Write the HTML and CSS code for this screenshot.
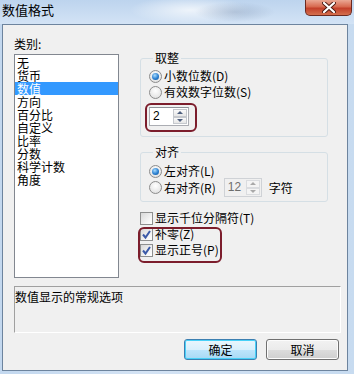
FILE: index.html
```html
<!DOCTYPE html>
<html lang="zh-CN">
  <head>
    <meta charset="UTF-8" />
    <title>数值格式</title>
    <link rel="stylesheet" href="styles.css">
  </head>
  <body>
    <div class="window">
      <div class="titlebar">
        <span class="title">数值格式</span>
        <span class="close">
          <svg width="14" height="11" viewBox="0 0 14 11">
            <path d="M2 1 L12 10 M12 1 L2 10" stroke="#4a1a12" stroke-width="4" stroke-linecap="round" />
            <path d="M2 1 L12 10 M12 1 L2 10" stroke="#fff" stroke-width="2.2" stroke-linecap="round" />
          </svg>
        </span>
      </div>
      <div class="client">
        <div class="top">
          <div class="left">
            <div class="label">类别:</div>
            <ul class="listbox">
              <li>无</li>
              <li>货币</li>
              <li class="selected">数值</li>
              <li>方向</li>
              <li>百分比</li>
              <li>自定义</li>
              <li>比率</li>
              <li>分数</li>
              <li>科学计数</li>
              <li>角度</li>
            </ul>
          </div>
          <div class="right">
            <fieldset class="group group-round">
              <legend>取整</legend>
              <div class="row"><span class="radio on"></span>小数位数(D)</div>
              <div class="row"><span class="radio"></span>有效数字位数(S)</div>
              <div class="spin">
                <span class="spin-value">2</span>
                <span class="spin-buttons">
                  <span class="spin-btn"><i class="arrow up"></i></span>
                  <span class="spin-btn"><i class="arrow down"></i></span>
                </span>
              </div>
            </fieldset>
            <fieldset class="group group-align">
              <legend>对齐</legend>
              <div class="row"><span class="radio on"></span>左对齐(L)</div>
              <div class="row row-spin">
                <span class="radio"></span>右对齐(R)
                <div class="spin disabled">
                  <span class="spin-value">12</span>
                  <span class="spin-buttons">
                    <span class="spin-btn"><i class="arrow up"></i></span>
                    <span class="spin-btn"><i class="arrow down"></i></span>
                  </span>
                </div>
                <span class="unit">字符</span>
              </div>
            </fieldset>
            <div class="checks">
              <div class="row"><span class="check"></span>显示千位分隔符(T)</div>
              <div class="row"><span class="check on"><svg width="11" height="11" viewBox="0 0 11 11"><path d="M2 5.5 L4.5 8.5 L9 2" fill="none" stroke="#3b5aa8" stroke-width="2" /></svg></span>补零(Z)</div>
              <div class="row"><span class="check on"><svg width="11" height="11" viewBox="0 0 11 11"><path d="M2 5.5 L4.5 8.5 L9 2" fill="none" stroke="#3b5aa8" stroke-width="2" /></svg></span>显示正号(P)</div>
            </div>
          </div>
        </div>
        <div class="description">数值显示的常规选项</div>
        <div class="buttons">
          <button class="btn default">确定</button>
          <button class="btn">取消</button>
        </div>
        <div class="mark mark-digits"></div>
        <div class="mark mark-checks"></div>
      </div>
    </div>
  </body>
</html>
```

FILE: styles.css
```css
body {
  margin: 0;
  font-family: "Noto Sans CJK SC", "Noto Sans", sans-serif;
  font-size: 12px;
  color: #000;
  background-color: #fff;
}
.window {
  width: 354px;
  height: 374px;
  display: flex;
  flex-direction: column;
  background: linear-gradient(90deg, #c3d8ef, #d4e3f4 40%, #c7dbf0);
  overflow: hidden;
}
.titlebar {
  height: 24px;
  display: flex;
  align-items: flex-start;
  justify-content: space-between;
  background:
    radial-gradient(ellipse 40px 10px at 235px 12px, rgba(120, 140, 170, 0.35), transparent),
    radial-gradient(ellipse 60px 14px at 190px 10px, rgba(255, 255, 255, 0.7), transparent),
    linear-gradient(180deg, #bdd4ee, #d3e3f5);
}
.title {
  font-size: 13px;
  line-height: 16px;
  padding: 2px 0 0 2px;
}
.close {
  width: 47px;
  height: 16px;
  margin-right: 2px;
  box-sizing: border-box;
  border: 1px solid #6b2a20;
  border-top: 0;
  border-radius: 0 0 5px 5px;
  background: linear-gradient(180deg, #eaa894, #d7694f 45%, #c3402a 55%, #d46f4e);
  display: flex;
  align-items: center;
  justify-content: center;
}
.client {
  position: relative;
  flex: 1;
  margin: 0 6px 3px 2px;
  border: 1px solid #6d849e;
  background-color: #f0f0f0;
  padding: 11px 6px 0 11px;
}
.top {
  display: flex;
  gap: 21px;
}
.left {
  width: 105px;
}
.label {
  line-height: 16px;
  margin-bottom: 2px;
}
.listbox {
  list-style: none;
  margin: 0;
  padding: 1px 0;
  height: 224px;
  box-sizing: border-box;
  border: 1px solid #828790;
  background-color: #fff;
}
.listbox li {
  line-height: 13px;
  height: 13px;
  padding-left: 2px;
}
.listbox .selected {
  background-color: #3399ff;
  color: #fff;
}
.right {
  width: 188px;
  padding-top: 15px;
}
.group {
  margin: 0;
  padding: 3px 0 10px 8px;
  border: 1px solid #d5dfe5;
  border-radius: 3px;
}
.group legend {
  padding: 0 2px;
  margin-left: 4px;
  line-height: 14px;
}
.group-align {
  margin-top: 8px;
  padding-top: 4px;
  padding-bottom: 4px;
}
.row {
  display: flex;
  align-items: center;
  height: 16px;
  line-height: 16px;
}
.row-spin {
  height: 19px;
  margin-top: -1px;
}
.radio {
  position: relative;
  width: 13px;
  height: 13px;
  margin-right: 2px;
  box-sizing: border-box;
  border-radius: 50%;
  border: 1px solid #8c8c8c;
  background: radial-gradient(circle at 50% 35%, #fff, #e6e6e6 70%, #d4d4d4);
}
.radio.on::after {
  content: "";
  position: absolute;
  left: 2px;
  top: 2px;
  width: 7px;
  height: 7px;
  border-radius: 50%;
  background: radial-gradient(circle at 40% 35%, #a8dcff, #2a7fd0 55%, #0d4f93);
}
.spin {
  display: flex;
  width: 40px;
  height: 19px;
  margin-top: 7px;
  box-sizing: border-box;
  border: 1px solid #abadb3;
  border-top-color: #8e9198;
  background-color: #fff;
  padding: 1px;
}
.spin-value {
  flex: 1;
  padding-left: 2px;
  line-height: 15px;
  font-family: "Liberation Sans", "Noto Sans", sans-serif;
  font-size: 12px;
}
.spin-buttons {
  display: flex;
  flex-direction: column;
  width: 14px;
}
.spin-btn {
  flex: 1;
  display: flex;
  align-items: center;
  justify-content: center;
  box-sizing: border-box;
  border: 1px solid #c5c8cd;
  background: linear-gradient(180deg, #fafafa, #e6e6e6);
}
.arrow {
  width: 0;
  height: 0;
  border-left: 3px solid transparent;
  border-right: 3px solid transparent;
}
.arrow.up {
  border-bottom: 3px solid #4e5f7e;
}
.arrow.down {
  border-top: 3px solid #4e5f7e;
}
.spin.disabled {
  width: 38px;
  margin: 0 7px 0 8px;
  border-color: #cfd2d6;
  background-color: #f0f0f0;
}
.spin.disabled .spin-value {
  color: #6d6d6d;
}
.spin.disabled .spin-btn {
  border-color: #dadcdf;
  background: #f4f4f4;
}
.spin.disabled .arrow.up {
  border-bottom-color: #a9a9a9;
}
.spin.disabled .arrow.down {
  border-top-color: #a9a9a9;
}
.checks {
  margin-top: 8px;
}
.check {
  width: 13px;
  height: 13px;
  margin-right: 2px;
  box-sizing: border-box;
  border: 1px solid #8e8f8f;
  background: linear-gradient(135deg, #d8d8d8, #f6f6f6 70%, #fff);
  display: flex;
  align-items: center;
  justify-content: center;
}
.description {
  margin-top: 8px;
  height: 47px;
  box-sizing: border-box;
  border: 1px solid #fff;
  border-top-color: #a0a0a0;
  border-left-color: #a0a0a0;
  line-height: 15px;
  padding-top: 2px;
}
.buttons {
  display: flex;
  justify-content: flex-end;
  gap: 9px;
  margin-top: 6px;
  padding-right: 2px;
}
.btn {
  width: 73px;
  height: 21px;
  padding: 0;
  font-family: "Noto Sans CJK SC", sans-serif;
  font-size: 12px;
  color: #000;
  border: 1px solid #707070;
  border-radius: 3px;
  background: linear-gradient(180deg, #f2f2f2, #ebebeb 50%, #dddddd 50%, #cfcfcf);
  box-shadow: inset 0 0 0 1px #fcfcfc;
}
.btn.default {
  border-color: #3c7fb1;
  background: linear-gradient(180deg, #eaf6fd, #d9f0fc 50%, #bee6fd 50%, #a7d9f5);
  box-shadow: inset 0 0 0 1px #48d1f8;
}
.mark {
  position: absolute;
  border: 2px solid #7c1d2c;
  border-radius: 6px;
}
.mark-digits {
  left: 142px;
  top: 78px;
  width: 48px;
  height: 25px;
}
.mark-checks {
  left: 135px;
  top: 202px;
  width: 80px;
  height: 32px;
}
```
